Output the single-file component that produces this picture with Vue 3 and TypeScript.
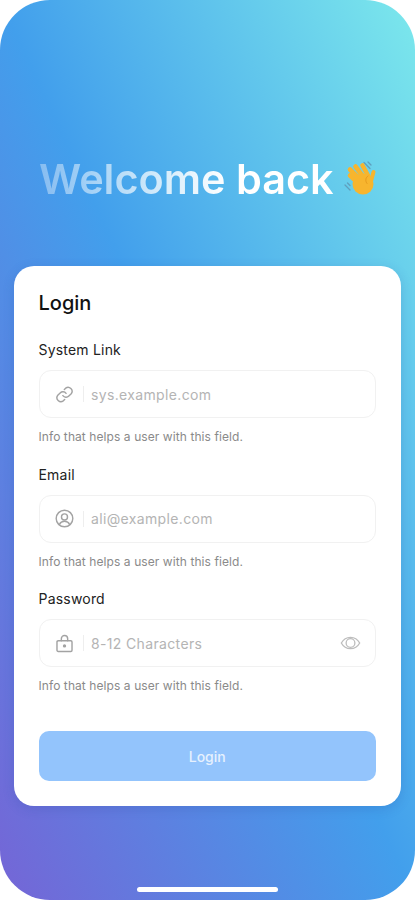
<script setup lang="ts">
interface Field {
  label: string
  placeholder: string
  icon: 'link' | 'user' | 'lock'
  reveal?: boolean
}

const fields: Field[] = [
  { label: 'System Link', placeholder: 'sys.example.com', icon: 'link' },
  { label: 'Email', placeholder: 'ali@example.com', icon: 'user' },
  { label: 'Password', placeholder: '8-12 Characters', icon: 'lock', reveal: true },
]
</script>

<template>
  <div class="screen">
    <div class="hero">
      <h1 class="title">Welcome back</h1>
      <svg class="wave" viewBox="0 0 36 36" width="36" height="36" fill="none" stroke-linecap="round">
        <path d="M2 24l5 5M4.500 22l2.500 2.500M21 1.500l6 6M25 1l3 3" stroke="#5f9fbd" stroke-width="1.300" />
        <g stroke="#f7b52e" stroke-width="4.600">
          <path d="M7 14.500l8.500 8" />
          <path d="M7 8.500l10 10" />
          <path d="M12.500 5.500l7.500 10" />
          <path d="M19.500 4.500l5.500 10" />
          <path d="M30.500 11l-3 11" stroke-width="4" />
        </g>
        <circle cx="20" cy="23" r="10.500" fill="#f7b52e" />
        <path d="M25 15c-2.500 1.500-3 5-1 7.500" stroke="#e69a1c" stroke-width="1" />
      </svg>
    </div>

    <form class="card" @submit.prevent>
      <h2 class="card-title">Login</h2>

      <div v-for="field in fields" :key="field.label" class="field">
        <div class="label">{{ field.label }}</div>
        <div class="input">
          <svg class="icon" viewBox="0 0 24 24" width="19" height="19" fill="none" stroke="#a3a3a3" stroke-width="1.800" stroke-linecap="round" stroke-linejoin="round">
            <template v-if="field.icon === 'link'">
              <path d="M10 13.500a5 5 0 0 0 7.500.5l3-3a5 5 0 0 0-7-7l-1.700 1.700" />
              <path d="M14 10.500a5 5 0 0 0-7.500-.5l-3 3a5 5 0 0 0 7 7l1.700-1.700" />
            </template>
            <template v-else-if="field.icon === 'user'">
              <circle cx="12" cy="12" r="10.500" />
              <circle cx="12" cy="10" r="3.800" />
              <path d="M5.500 19.500c1.300-2.800 3.700-4 6.500-4s5.200 1.200 6.500 4" />
            </template>
            <template v-else>
              <rect x="2.500" y="8.500" width="19" height="13.500" rx="1.500" />
              <path d="M8 8.500V6a4 4 0 0 1 8 0v2.500" />
              <circle cx="12" cy="15" r="1.200" fill="#a3a3a3" />
            </template>
          </svg>
          <span class="divider"></span>
          <span class="placeholder">{{ field.placeholder }}</span>
          <svg v-if="field.reveal" class="eye" viewBox="0 0 24 18" width="21" height="16" fill="none" stroke="#bdbdbd" stroke-width="1.500">
            <path d="M1.500 9C4 4.500 8 2.500 12 2.500s8 2 10.500 6.500C20 13.500 16 15.500 12 15.500S4 13.500 1.500 9z" />
            <circle cx="12" cy="9" r="5" />
          </svg>
        </div>
        <div class="help">Info that helps a user with this field.</div>
      </div>

      <button class="submit" type="button">Login</button>
    </form>

    <div class="home-bar"></div>
  </div>
</template>

<style>
html,
body {
  margin: 0;
  background: #fff;
}
</style>

<style scoped>
.screen {
  position: relative;
  width: 415px;
  height: 900px;
  box-sizing: border-box;
  padding: 0 14px;
  overflow: hidden;
  border-radius: 50px;
  background: linear-gradient(to top right, #7565d6 0%, #429fec 50%, #7ce8ec 100%);
  font-family: Inter, 'Liberation Sans', sans-serif;
}

.hero {
  display: flex;
  align-items: center;
  gap: 9px;
  height: 266px;
  box-sizing: border-box;
  padding: 91px 0 0 25px;
}

.title {
  margin: 0;
  font-size: 41.4px;
  font-weight: 600;
  line-height: 48px;
  white-space: nowrap;
  background: linear-gradient(90deg, rgba(255, 255, 255, 0.35) 0%, #fff 65%);
  -webkit-background-clip: text;
  background-clip: text;
  color: transparent;
}

.wave {
  flex: none;
}

.card {
  display: flex;
  flex-direction: column;
  height: 540px;
  box-sizing: border-box;
  padding: 23px 25px 0 24.5px;
  background: #fff;
  border-radius: 20px;
  box-shadow: 0 3px 12px rgba(40, 70, 160, 0.2);
}

.card-title {
  margin: 0 0 23px;
  font-size: 20px;
  font-weight: 500;
  line-height: 28px;
  color: #111;
}

.field {
  margin-bottom: 18.5px;
}

.label {
  font-size: 14px;
  line-height: 20px;
  letter-spacing: 0.2px;
  color: #222;
  margin-bottom: 10px;
}

.input {
  display: flex;
  align-items: center;
  height: 48px;
  box-sizing: border-box;
  padding: 0 14px 0 15.500px;
  border: 1px solid #f1f1f1;
  border-radius: 12px;
}

.divider {
  width: 1px;
  height: 16px;
  margin: 0 7px 0 9px;
  background: #eeeeee;
}

.placeholder {
  flex: 1;
  font-size: 14px;
  letter-spacing: 0.35px;
  color: #b4b4b4;
}

.help {
  margin-top: 10px;
  font-size: 12px;
  line-height: 18px;
  letter-spacing: 0.08px;
  color: #8a8a8a;
}

.submit {
  height: 50px;
  margin-top: 17.5px;
  border: 0;
  border-radius: 10px;
  background: #93c4fc;
  color: #e6f1fe;
  font-family: inherit;
  font-size: 14px;
  font-weight: 500;
}

.home-bar {
  position: absolute;
  left: 137px;
  bottom: 8px;
  width: 141px;
  height: 5px;
  border-radius: 3px;
  background: #fff;
}
</style>
